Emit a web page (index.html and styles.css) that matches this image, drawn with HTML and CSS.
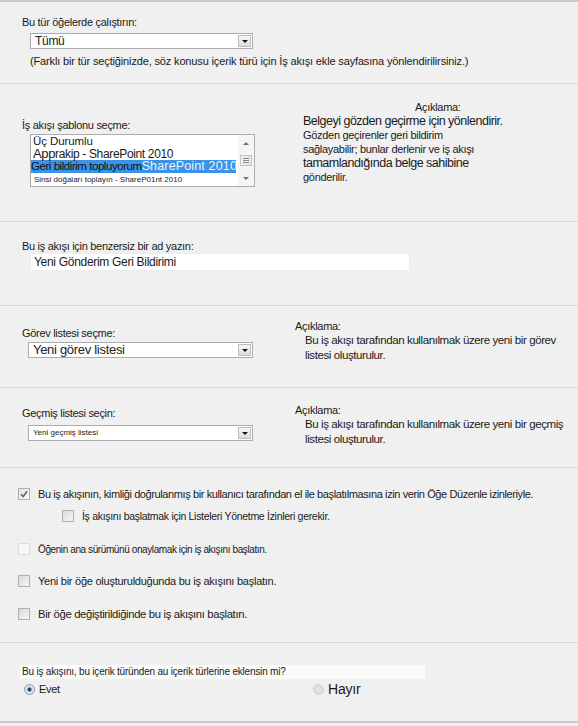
FILE: index.html
```html
<!DOCTYPE html>
<html lang="tr">
<head>
<meta charset="utf-8">
<title>İş akışı ekle</title>
<link rel="stylesheet" href="styles.css">
</head>
<body>
<div class="page">

  <div class="section sec-type">
    <div class="label">Bu tür öğelerde çalıştırın:</div>
    <div class="select sel-type">
      <span class="select-text">Tümü</span>
      <span class="select-btn"><span class="tri-down"></span></span>
    </div>
    <div class="note">(Farklı bir tür seçtiğinizde, söz konusu içerik türü için İş akışı ekle sayfasına yönlendirilirsiniz.)</div>
  </div>

  <div class="section sec-template">
    <div class="col-left">
      <div class="label lbl-template">İş akışı şablonu seçme:</div>
      <div class="listbox">
        <div class="list-items">
          <div class="item item-1">Üç Durumlu</div>
          <div class="item item-2"><span class="big-a">App</span>rakip - SharePoint 2010</div>
          <div class="item item-sel"><span class="sel-a">Geri bildirim topluyorum</span><span class="sel-b">SharePoint 2010</span></div>
          <div class="item item-4">Sinsi doğaları toplayın - ShareP01nt 2010</div>
        </div>
        <div class="scrollbar">
          <span class="sb-arrow"><span class="tri-up"></span></span>
          <span class="sb-thumb"><span class="grip"></span></span>
          <span class="sb-arrow"><span class="tri-down grey"></span></span>
        </div>
      </div>
    </div>
    <div class="col-right">
      <div class="desc-head head-template">Açıklama:</div>
      <div class="desc-lines">
        <span class="dl big">Belgeyi gözden geçirme için yönlendirir.</span>
        <span class="dl">Gözden geçirenler geri bildirim</span>
        <span class="dl">sağlayabilir; bunlar derlenir ve iş akışı</span>
        <span class="dl big">tamamlandığında belge sahibine</span>
        <span class="dl">gönderilir.</span>
      </div>
    </div>
  </div>

  <div class="section sec-name">
    <div class="label">Bu iş akışı için benzersiz bir ad yazın:</div>
    <div class="textbox">Yeni Gönderim Geri Bildirimi</div>
  </div>

  <div class="section sec-task">
    <div class="col-left">
      <div class="label lbl-task">Görev listesi seçme:</div>
      <div class="select sel-list">
        <span class="select-text txt-task">Yeni görev listesi</span>
        <span class="select-btn"><span class="tri-down"></span></span>
      </div>
    </div>
    <div class="col-right">
      <div class="desc-head">Açıklama:</div>
      <div class="desc-small">
        <span class="dl">Bu iş akışı tarafından kullanılmak üzere yeni bir görev</span>
        <span class="dl">listesi oluşturulur.</span>
      </div>
    </div>
  </div>

  <div class="section sec-history">
    <div class="col-left">
      <div class="label lbl-history">Geçmiş listesi seçin:</div>
      <div class="select sel-list sel-history">
        <span class="select-text txt-tiny">Yeni geçmiş listesi</span>
        <span class="select-btn"><span class="tri-down"></span></span>
      </div>
    </div>
    <div class="col-right">
      <div class="desc-head">Açıklama:</div>
      <div class="desc-small">
        <span class="dl">Bu iş akışı tarafından kullanılmak üzere yeni bir geçmiş</span>
        <span class="dl">listesi oluşturulur.</span>
      </div>
    </div>
  </div>

  <div class="section sec-options">
    <div class="opt opt-1">
      <span class="cb checked"><svg viewBox="0 0 10 10" width="10" height="10"><path d="M2 5.2 L4.2 7.6 L8 2.2" fill="none" stroke="#4c5d7d" stroke-width="1.5"/></svg></span>
      <span class="opt-text t-1">Bu iş akışının, kimliği doğrulanmış bir kullanıcı tarafından el ile başlatılmasına izin verin Öğe Düzenle izinleriyle.</span>
    </div>
    <div class="opt opt-sub">
      <span class="cb"></span>
      <span class="opt-text t-sub">İş akışını başlatmak için Listeleri Yönetme İzinleri gerekir.</span>
    </div>
    <div class="opt opt-3">
      <span class="cb faint"></span>
      <span class="opt-text t-3">Öğenin ana sürümünü onaylamak için iş akışını başlatın.</span>
    </div>
    <div class="opt opt-4">
      <span class="cb"></span>
      <span class="opt-text t-4">Yeni bir öğe oluşturulduğunda bu iş akışını başlatın.</span>
    </div>
    <div class="opt opt-5">
      <span class="cb"></span>
      <span class="opt-text t-5">Bir öğe değiştirildiğinde bu iş akışını başlatın.</span>
    </div>
  </div>

  <div class="section sec-update">
    <div class="question">Bu iş akışını, bu içerik türünden au içerik türlerine eklensin mi?</div>
    <div class="radios">
      <div class="radio-opt r-yes">
        <span class="radio on"></span>
        <span class="r-text">Evet</span>
      </div>
      <div class="radio-opt r-no">
        <span class="radio"></span>
        <span class="r-text r-big">Hayır</span>
      </div>
    </div>
  </div>

</div>
</body>
</html>
```
FILE: styles.css
```css
* { box-sizing: border-box; }

body {
  margin: 0;
  background: #f0f0f0;
  font-family: "Liberation Sans", Arial, sans-serif;
  font-size: 11px;
  color: #1a1a1a;
  letter-spacing: -0.3px;
}

.page {
  border-top: 2px solid #c9c9c9;
  border-bottom: 2px solid #cbcbcb;
}

.section {
  border-bottom: 1px solid #d9d9d9;
  padding-left: 22px;
}
.section:last-child { border-bottom: none; }

.label { line-height: 14px; white-space: nowrap; }

/* dropdowns */
.select {
  display: flex;
  align-items: center;
  justify-content: space-between;
  height: 16px;
  background: #fff;
  border: 1px solid #acacac;
}
.select-text {
  padding-left: 4px;
  font-size: 12px;
  line-height: 14px;
  color: #222;
}
.select-btn {
  display: flex;
  align-items: center;
  justify-content: center;
  width: 13px;
  height: 12px;
  margin-right: 1px;
  border: 1px solid #bdbdbd;
  background: linear-gradient(#f7f7f7, #dcdcdc);
}
.tri-down {
  width: 0; height: 0;
  border-left: 3px solid transparent;
  border-right: 3px solid transparent;
  border-top: 3px solid #1a1a1a;
}
.tri-down.grey { border-top-color: #707070; }
.tri-up {
  width: 0; height: 0;
  border-left: 3px solid transparent;
  border-right: 3px solid transparent;
  border-bottom: 3px solid #707070;
}

/* section 1 */
.sec-type { padding-top: 13px; padding-bottom: 15px; }
.sel-type { margin: 4px 0 0 8px; width: 223px; }
.note { margin: 5px 0 0 8px; line-height: 14px; letter-spacing: -0.15px; white-space: nowrap; }

/* two-column sections */
.sec-template, .sec-task, .sec-history {
  display: grid;
  align-items: start;
}
.sec-template { grid-template-columns: 281px 1fr; padding-top: 17px; padding-bottom: 34px; }
.sec-task { grid-template-columns: 273px 1fr; padding-top: 13px; padding-bottom: 24px; }
.sec-history { grid-template-columns: 273px 1fr; padding-top: 15px; padding-bottom: 20px; }

.lbl-template { margin-top: 17px; }
.lbl-task { margin-top: 7px; }
.lbl-history { margin-top: 3px; }

.listbox {
  display: flex;
  margin: 2px 0 0 8px;
  width: 225px;
  height: 53px;
  background: #fff;
  border: 1px solid #acacac;
}
.list-items { flex: 1; padding-right: 2px; overflow: hidden; }
.item { padding-left: 2px; white-space: nowrap; }
.item-1 { font-size: 11.5px; line-height: 12px; height: 12px; letter-spacing: -0.1px; }
.item-2 { font-size: 12px; line-height: 13px; height: 13px; letter-spacing: -0.35px; }
.big-a { font-size: 13px; }
.item-sel {
  background: #3a93e6;
  line-height: 13px;
  height: 13px;
  padding-left: 0;
}
.sel-a { font-size: 11.5px; color: #111; letter-spacing: -0.45px; }
.sel-b { font-size: 12.5px; color: #eaf3ff; letter-spacing: 0.15px; }
.item-4 { font-size: 8px; line-height: 13px; letter-spacing: 0; padding-left: 3px; }

.scrollbar {
  display: flex;
  flex-direction: column;
  justify-content: space-between;
  align-items: center;
  width: 16px;
  background: #f5f5f5;
  padding: 3px 0;
}
.sb-arrow {
  display: flex;
  align-items: center;
  justify-content: center;
  width: 12px;
  height: 10px;
}
.sb-thumb {
  display: flex;
  align-items: center;
  justify-content: center;
  width: 12px;
  height: 11px;
  border: 1px solid #c3c3c3;
  background: linear-gradient(90deg, #f4f4f4, #e2e2e2);
}
.grip {
  width: 6px;
  height: 5px;
  border-top: 1px solid #8a8a8a;
  border-bottom: 1px solid #8a8a8a;
  background: linear-gradient(#f4f4f4 40%, #8a8a8a 40%, #8a8a8a 60%, #f4f4f4 60%);
}

.desc-head { line-height: 14px; }
.head-template { padding-left: 112px; line-height: 13px; }
.desc-lines .dl { display: block; line-height: 14px; white-space: nowrap; }
.dl.big { font-size: 12.5px; letter-spacing: -0.5px; }

.desc-small { padding-left: 10px; }
.desc-small .dl { display: block; font-size: 11.5px; line-height: 15px; letter-spacing: -0.4px; white-space: nowrap; }

.sel-list { margin: 2px 0 0 6px; width: 225px; }
.sel-history { margin-top: 5px; }
.txt-task { font-size: 13px; }
.txt-tiny { font-size: 8px; letter-spacing: 0; }

/* name section */
.sec-name { padding-top: 17px; padding-bottom: 34px; }
.textbox {
  margin-left: 8px;
  width: 380px;
  height: 18px;
  background: #fff;
  border: 1px solid #ececec;
  padding-left: 3px;
  font-size: 12px;
  line-height: 16px;
}

/* options */
.sec-options { padding: 18px 0 20px 18px; }
.opt {
  display: flex;
  align-items: center;
  height: 16px;
}
.opt-sub { margin-top: 6px; padding-left: 44px; }
.opt-3 { margin-top: 17px; }
.opt-4 { margin-top: 16px; }
.opt-5 { margin-top: 17px; }
.cb {
  display: flex;
  align-items: center;
  justify-content: center;
  flex: none;
  width: 12px;
  height: 12px;
  margin-right: 8px;
  border: 1px solid #b0b0b0;
  background: linear-gradient(135deg, #d8d8d8, #f7f7f7);
}
.cb.checked { background: linear-gradient(135deg, #e4e4e4, #fafafa); }
.cb.faint { border-color: #dcdcdc; background: #f7f7f7; }
.opt-text { white-space: nowrap; }
.t-1 { letter-spacing: -0.4px; }
.t-sub { font-size: 10.5px; }
.t-3 { font-size: 10px; letter-spacing: -0.4px; }
.t-4 { font-size: 11px; letter-spacing: -0.25px; }
.t-5 { font-size: 11.3px; letter-spacing: -0.35px; }

/* update section */
.sec-update { padding-top: 22px; padding-bottom: 24px; }
.question {
  margin-left: -2px;
  padding-left: 2px;
  width: 405px;
  font-size: 10px;
  letter-spacing: -0.2px;
  line-height: 14px;
  background: #fafafa;
  white-space: nowrap;
}
.radios { display: flex; align-items: center; margin-top: 2px; height: 16px; }
.radio-opt { display: flex; align-items: center; }
.r-yes { width: 289px; margin-left: 2px; }
.radio {
  width: 11px;
  height: 11px;
  border-radius: 50%;
  margin-right: 4px;
  border: 1px solid #cfcfcf;
  background: radial-gradient(circle at 50% 50%, #e6e6e6, #d4d4d4);
}
.radio.on {
  border-color: #8e9aaa;
  background: radial-gradient(circle at 50% 50%, #1f3c68 0, #2d4f80 28%, #c9d3e0 36%, #e8ecf2 70%);
}
.r-big { font-size: 14px; letter-spacing: -0.2px; }
```
